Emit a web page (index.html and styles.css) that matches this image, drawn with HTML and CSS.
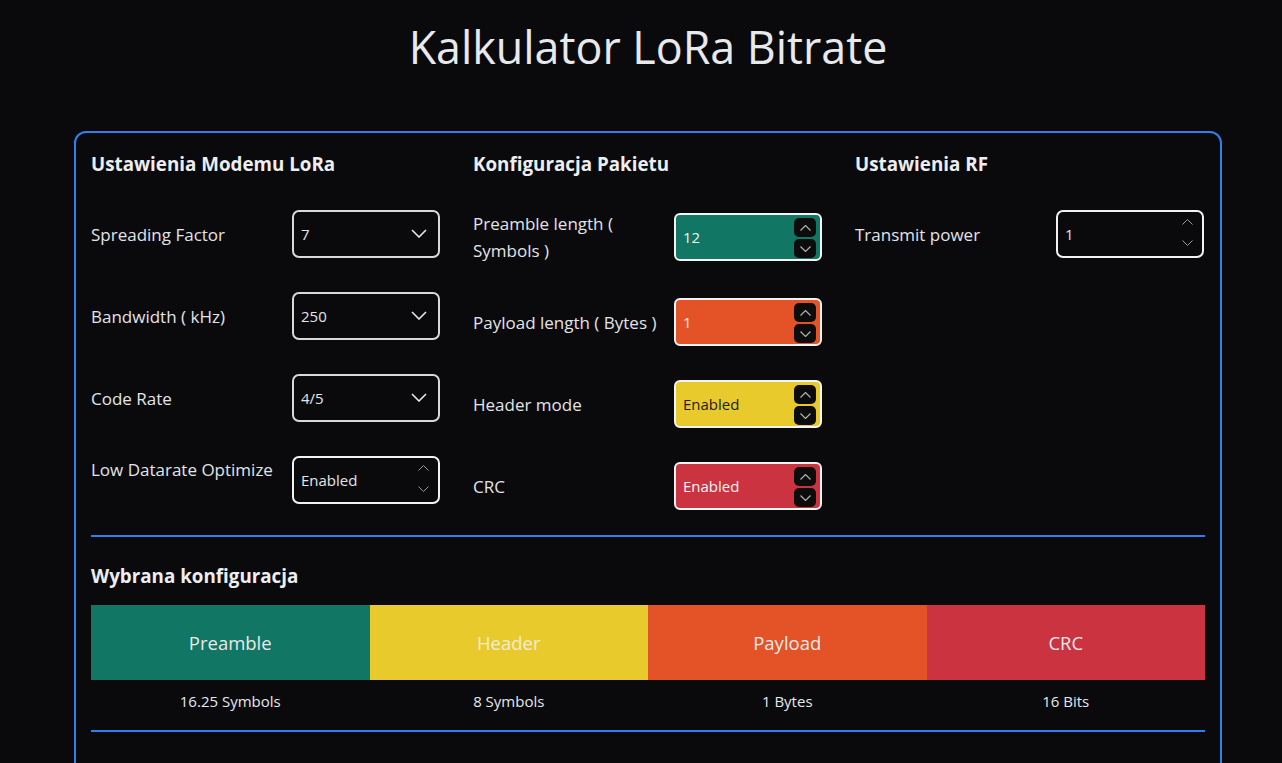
FILE: index.html
```html
<!DOCTYPE html>
<html lang="pl">
<head>
<meta charset="utf-8">
<title>Kalkulator LoRa Bitrate</title>
<link rel="stylesheet" href="styles.css">
</head>
<body>
<div class="page">
<h1 class="title">Kalkulator LoRa Bitrate</h1>
<main class="card">
  <section class="settings">
    <div class="col">
      <h2 class="heading">Ustawienia Modemu LoRa</h2>
      <div class="rows">
        <div class="row">
          <span class="label">Spreading Factor</span>
          <div class="field select"><span class="val">7</span>
            <svg class="chev" width="16" height="9" viewBox="0 0 16 9"><path d="M1 1l7 7 7-7" fill="none" stroke="#e8e8e8" stroke-width="1.6"/></svg>
          </div>
        </div>
        <div class="row">
          <span class="label">Bandwidth ( kHz)</span>
          <div class="field select"><span class="val">250</span>
            <svg class="chev" width="16" height="9" viewBox="0 0 16 9"><path d="M1 1l7 7 7-7" fill="none" stroke="#e8e8e8" stroke-width="1.6"/></svg>
          </div>
        </div>
        <div class="row">
          <span class="label">Code Rate</span>
          <div class="field select"><span class="val">4/5</span>
            <svg class="chev" width="16" height="9" viewBox="0 0 16 9"><path d="M1 1l7 7 7-7" fill="none" stroke="#e8e8e8" stroke-width="1.6"/></svg>
          </div>
        </div>
        <div class="row">
          <span class="label label-top">Low Datarate Optimize</span>
          <div class="field number"><span class="val">Enabled</span>
            <span class="mini">
              <svg width="11" height="6" viewBox="0 0 11 6"><path d="M0.5 5.5l5-5 5 5" fill="none" stroke="#9a9a9a" stroke-width="1"/></svg>
              <svg width="11" height="6" viewBox="0 0 11 6"><path d="M0.5 0.5l5 5 5-5" fill="none" stroke="#9a9a9a" stroke-width="1"/></svg>
            </span>
          </div>
        </div>
      </div>
    </div>

    <div class="col">
      <h2 class="heading">Konfiguracja Pakietu</h2>
      <div class="rows">
        <div class="row">
          <span class="label">Preamble length ( Symbols )</span>
          <div class="field spin teal"><span class="val">12</span>
            <span class="btns">
              <span class="btn"><svg width="11" height="6" viewBox="0 0 11 6"><path d="M0.5 5.5l5-5 5 5" fill="none" stroke="#b0b0b0" stroke-width="1.2"/></svg></span>
              <span class="btn"><svg width="11" height="6" viewBox="0 0 11 6"><path d="M0.5 0.5l5 5 5-5" fill="none" stroke="#b0b0b0" stroke-width="1.2"/></svg></span>
            </span>
          </div>
        </div>
        <div class="row">
          <span class="label">Payload length ( Bytes )</span>
          <div class="field spin orange"><span class="val">1</span>
            <span class="btns">
              <span class="btn"><svg width="11" height="6" viewBox="0 0 11 6"><path d="M0.5 5.5l5-5 5 5" fill="none" stroke="#b0b0b0" stroke-width="1.2"/></svg></span>
              <span class="btn"><svg width="11" height="6" viewBox="0 0 11 6"><path d="M0.5 0.5l5 5 5-5" fill="none" stroke="#b0b0b0" stroke-width="1.2"/></svg></span>
            </span>
          </div>
        </div>
        <div class="row">
          <span class="label">Header mode</span>
          <div class="field spin yellow"><span class="val">Enabled</span>
            <span class="btns">
              <span class="btn"><svg width="11" height="6" viewBox="0 0 11 6"><path d="M0.5 5.5l5-5 5 5" fill="none" stroke="#b0b0b0" stroke-width="1.2"/></svg></span>
              <span class="btn"><svg width="11" height="6" viewBox="0 0 11 6"><path d="M0.5 0.5l5 5 5-5" fill="none" stroke="#b0b0b0" stroke-width="1.2"/></svg></span>
            </span>
          </div>
        </div>
        <div class="row">
          <span class="label">CRC</span>
          <div class="field spin red"><span class="val">Enabled</span>
            <span class="btns">
              <span class="btn"><svg width="11" height="6" viewBox="0 0 11 6"><path d="M0.5 5.5l5-5 5 5" fill="none" stroke="#b0b0b0" stroke-width="1.2"/></svg></span>
              <span class="btn"><svg width="11" height="6" viewBox="0 0 11 6"><path d="M0.5 0.5l5 5 5-5" fill="none" stroke="#b0b0b0" stroke-width="1.2"/></svg></span>
            </span>
          </div>
        </div>
      </div>
    </div>

    <div class="col">
      <h2 class="heading">Ustawienia RF</h2>
      <div class="rows">
        <div class="row">
          <span class="label">Transmit power</span>
          <div class="field number"><span class="val">1</span>
            <span class="mini">
              <svg width="11" height="6" viewBox="0 0 11 6"><path d="M0.5 5.5l5-5 5 5" fill="none" stroke="#9a9a9a" stroke-width="1"/></svg>
              <svg width="11" height="6" viewBox="0 0 11 6"><path d="M0.5 0.5l5 5 5-5" fill="none" stroke="#9a9a9a" stroke-width="1"/></svg>
            </span>
          </div>
        </div>
      </div>
    </div>
  </section>

  <hr class="divider">

  <h2 class="heading config-heading">Wybrana konfiguracja</h2>
  <div class="bar">
    <div class="seg teal">Preamble</div>
    <div class="seg yellow">Header</div>
    <div class="seg orange">Payload</div>
    <div class="seg red">CRC</div>
  </div>
  <div class="sub">
    <span>16.25 Symbols</span>
    <span>8 Symbols</span>
    <span>1 Bytes</span>
    <span>16 Bits</span>
  </div>

  <hr class="divider divider-2">

  <h2 class="heading">Wyniki obliczeń</h2>
</main>
</div>
</body>
</html>
```

FILE: styles.css
```css
* { box-sizing: border-box; }

html, body {
  margin: 0;
  padding: 0;
  background: #0a0a0c;
  color: #e4e5e8;
  font-family: "Open Sans", "Noto Sans", sans-serif;
  overflow: hidden;
}

.page {
  margin-left: 74px;
  width: 1148px;
}

.title {
  margin: 0;
  padding-top: 20px;
  font-size: 44.8px;
  font-weight: 400;
  line-height: 54px;
  text-align: center;
  color: #e8e9ec;
}

.card {
  margin-top: 57px;
  border: 2px solid #2f7fee;
  border-radius: 12px;
  padding: 18px 15px 40px 15px;
}

.settings {
  display: grid;
  grid-template-columns: repeat(3, 349px);
  column-gap: 33px;
  align-items: start;
}

.heading {
  margin: 0;
  font-size: 18.8px;
  font-weight: 700;
  line-height: 26px;
  color: #eceef1;
}

.rows {
  margin-top: 33px;
  display: flex;
  flex-direction: column;
  gap: 34px;
}

.row {
  display: grid;
  grid-template-columns: 1fr 148px;
  column-gap: 8px;
  align-items: center;
}

.label {
  font-size: 17px;
  line-height: 27px;
  color: #e2e4e7;
}

.label-top { align-self: start; }

.field {
  height: 48px;
  border-radius: 7px;
  display: flex;
  align-items: center;
  position: relative;
  font-size: 15px;
}

.field .val { padding-left: 7px; }

.select {
  border: 2px solid #d9d9d9;
}

.select .chev {
  position: absolute;
  right: 11px;
  top: 17px;
}

.number {
  border: 2px solid #f2f2f2;
}

.mini {
  position: absolute;
  right: 9px;
  top: 7px;
  display: flex;
  flex-direction: column;
  gap: 15px;
}
.mini svg { display: block; }

.spin {
  border: 2px solid #f4f4f4;
  border-radius: 6px;
}
.spin .val { padding-left: 7px; }

.btns {
  position: absolute;
  right: 4px;
  top: 3px;
  display: flex;
  flex-direction: column;
  gap: 2px;
}

.btn {
  width: 22px;
  height: 19px;
  border-radius: 5px;
  background: #0c0c0d;
  display: flex;
  align-items: center;
  justify-content: center;
}
.btn svg { display: block; }

.teal { background: #117663; color: #f1f1f1; }
.orange { background: #e35327; color: #f4f4f4; }
.yellow { background: #e9ca2c; color: #1d1d1d; }
.red { background: #cb3341; color: #f4f4f4; }

.divider {
  margin: 25px 0 0 0;
  border: 0;
  height: 2px;
  background: #2f7fee;
}

.config-heading { margin-top: 26px; }

.bar {
  margin-top: 16px;
  display: grid;
  grid-template-columns: repeat(4, 1fr);
  height: 75px;
}

.seg {
  display: flex;
  align-items: center;
  justify-content: center;
  font-size: 18.5px;
  color: #e9e9e9;
}
.seg.yellow { color: #f1ecd6; }

.sub {
  display: grid;
  grid-template-columns: repeat(4, 1fr);
  padding-top: 10px;
  line-height: 22px;
  font-size: 15px;
  text-align: center;
  color: #e6e7ea;
}

.divider-2 { margin-top: 18px; margin-bottom: 26px; }
```
